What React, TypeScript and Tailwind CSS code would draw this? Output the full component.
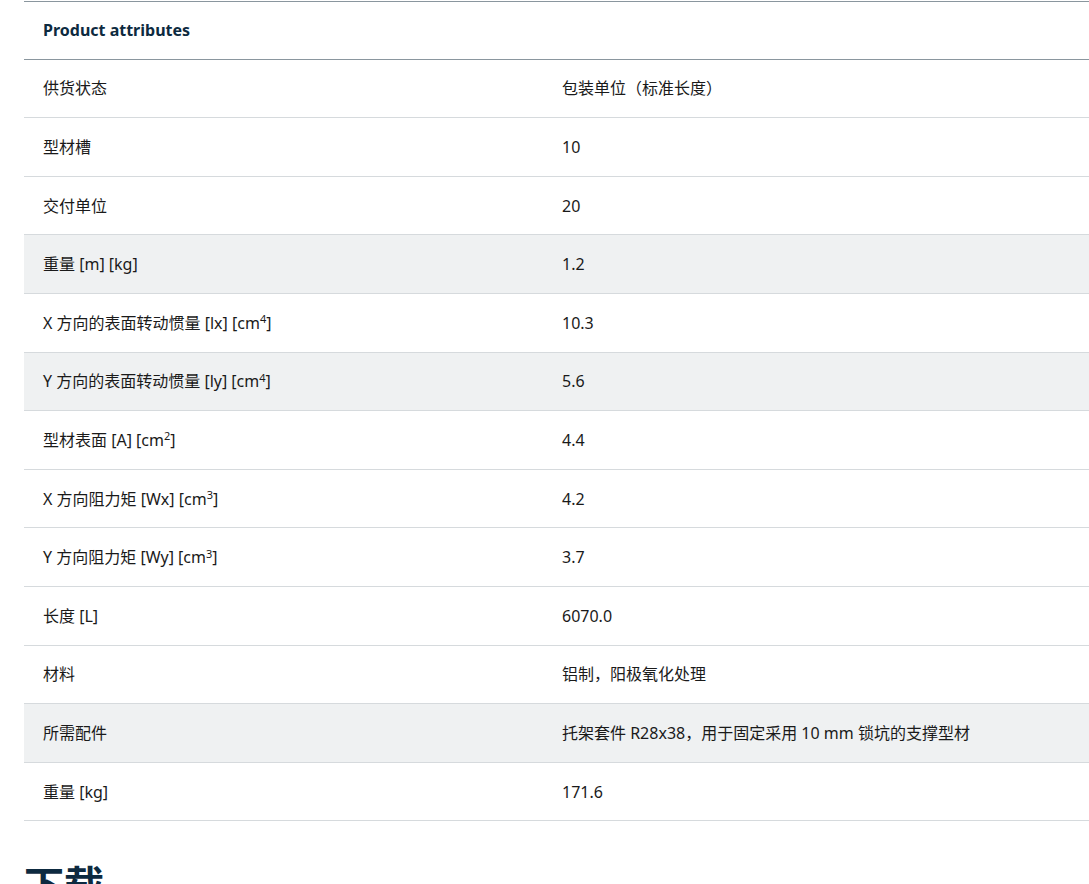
const rows: [string, React.ReactNode, boolean][] = [
  ["供货状态", "包装单位（标准长度）", false],
  ["型材槽", "10", false],
  ["交付单位", "20", false],
  ["重量 [m] [kg]", "1.2", true],
  [<>X 方向的表面转动惯量 [lx] [cm<sup>4</sup>]</>, "10.3", false],
  [<>Y 方向的表面转动惯量 [ly] [cm<sup>4</sup>]</>, "5.6", true],
  [<>型材表面 [A] [cm<sup>2</sup>]</>, "4.4", false],
  [<>X 方向阻力矩 [Wx] [cm<sup>3</sup>]</>, "4.2", false],
  [<>Y 方向阻力矩 [Wy] [cm<sup>3</sup>]</>, "3.7", false],
  ["长度 [L]", "6070.0", false],
  ["材料", "铝制，阳极氧化处理", false],
  ["所需配件", "托架套件 R28x38，用于固定采用 10 mm 锁坑的支撑型材", true],
  ["重量 [kg]", "171.6", false],
] as any;

export default function App() {
  return (
    <div className="h-[884px] overflow-hidden bg-white pl-6 text-[16px] text-[#1a1a1a]" style={{ fontFamily: '"Noto Sans", "Noto Sans CJK SC", sans-serif' }}>
      <div className="w-[1100px]">
        <div className="mt-px flex h-[58.6px] items-center border-t border-b border-[#8a969e] pl-[19px] font-bold text-[#0d2a40]">Product attributes</div>
        {rows.map(([k, v, s], i) => (
          <div key={i} className={`flex h-[58.6px] items-center border-b border-[#d6dadd] pl-[19px] ${s ? "bg-[#eff1f2]" : ""}`}>
            <div className="w-[519px] [&_sup]:text-[11px]">{k}</div>
            <div>{v}</div>
          </div>
        ))}
        <div className="mt-[44px] text-[40px] font-bold leading-none text-[#0d2a40]">下载</div>
      </div>
    </div>
  );
}
